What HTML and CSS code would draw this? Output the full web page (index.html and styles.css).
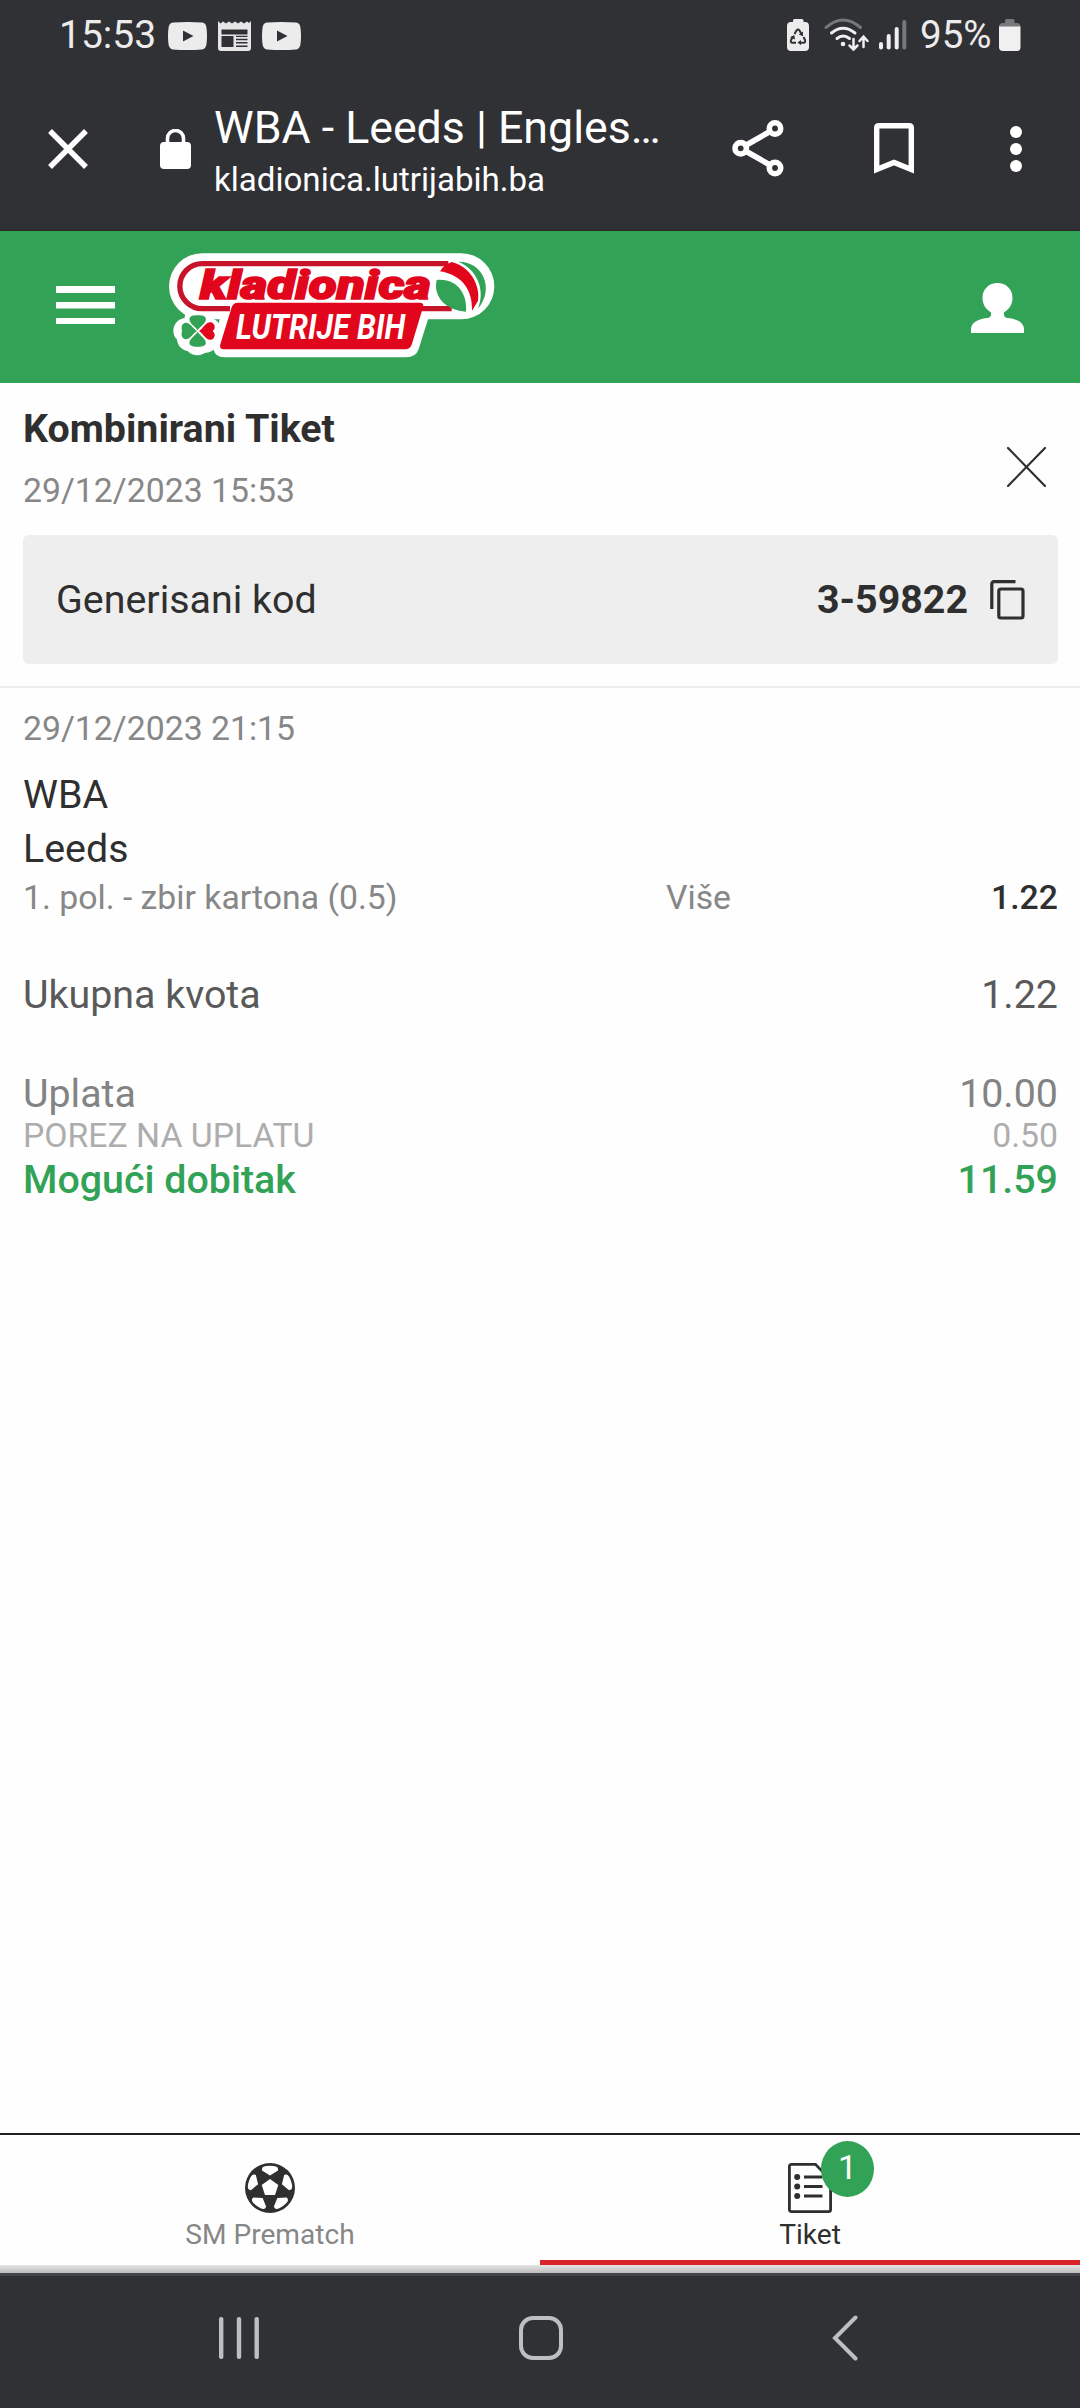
FILE: index.html
```html
<!DOCTYPE html>
<html lang="bs">
<head>
<meta charset="utf-8">
<title>WBA - Leeds</title>
<link rel="stylesheet" href="styles.css">
</head>
<body>
<div class="status">
  <span class="clock">15:53</span>
  <svg class="yt" width="39" height="28" viewBox="0 0 39 28"><path fill="#ececec" fill-rule="evenodd" d="M5 .6Q19.500-.6 34 .6Q38 1 38.500 6Q39.500 14 38.500 22Q38 27 34 27.400Q19.500 28.600 5 27.400Q1 27 .5 22Q-.5 14 .5 6Q1 1 5 .6ZM15 8.500V19.500L25.500 14Z"/></svg>
  <svg class="news" width="33" height="30" viewBox="0 0 33 30"><path fill="#e6e6e6" fill-rule="evenodd" d="M0 0L2.500 2.500L5 .5L8 2.500L11 .5L14 2.500L17 .5L20 2.500L23 .5L26 2.500L29 .5L31 2L33 0V27Q33 30 30 30H3Q0 30 0 27ZM3.500 8.500V13.500H29.500V8.500ZM3.500 15V26H15.500V15ZM18 14.800V16H29.500V14.800ZM18 17.800V19.200H29.500V17.800ZM18 21V22.400H29.500V21ZM18 24.500V26H29.500V24.500Z"/></svg>
  <svg class="yt" width="39" height="28" viewBox="0 0 39 28"><path fill="#ececec" fill-rule="evenodd" d="M5 .6Q19.500-.6 34 .6Q38 1 38.500 6Q39.500 14 38.500 22Q38 27 34 27.400Q19.500 28.600 5 27.400Q1 27 .5 22Q-.5 14 .5 6Q1 1 5 .6ZM15 8.500V19.500L25.500 14Z"/></svg>
  <svg class="saver" width="22" height="32" viewBox="0 0 22 32"><path fill="#ececec" d="M6 3V1.500Q6 0 7.500 0H15Q16.500 0 16.500 1.500V3H18Q22 3 22 7V28Q22 32 18 32H4Q0 32 0 28V7Q0 3 4 3Z"/><g fill="none" stroke="#303135" stroke-width="2"><path d="M7.500 15L9.500 11.500Q11 9.500 12.500 11.500L14.500 15"/><path d="M16.500 18L18 21Q18.800 23.500 16.500 23.700H13"/><path d="M9 23.700H5.500Q3.200 23.500 4 21L5.800 18"/></g><path fill="#303135" d="M16 12.500V17.200L11.800 15.500ZM14 21V26.200L10.500 23.600ZM3 18.300L7.300 16L8 20.500Z"/></svg>
  <svg class="wifi" width="46" height="34" viewBox="0 0 46 34"><g fill="none" stroke="#f0f0f0" stroke-width="3" stroke-linecap="round"><path stroke="#77787a" d="M2 9.500Q19-5.500 36.500 9.500"/><path d="M7.500 15Q19 5.500 31 15"/><path d="M13 20.500Q19 15.500 25.500 20.500"/><path d="M29.500 21V31M25.500 27.500L29.500 31.500L33.500 27.500M39.500 29V19M35.500 23L39.500 18.700L43.500 23" stroke-width="2.500"/></g><circle cx="19" cy="26" r="2.300" fill="#f0f0f0"/></svg>
  <svg class="signal" width="28" height="30" viewBox="0 0 28 30"><g fill="#f0f0f0"><rect y="22" width="4" height="7.500" rx="2"/><rect x="7.700" y="14" width="4" height="15.500" rx="2"/><rect x="15.700" y="7" width="4" height="22.500" rx="2"/><rect x="23.300" y="0" width="4" height="29.500" rx="2" fill="#77787a"/></g></svg>
  <span class="percent">95%</span>
  <svg class="battery" width="22" height="32" viewBox="0 0 22 32"><path fill="#77787a" d="M6 4V1.500Q6 0 7.500 0H14Q15.500 0 15.500 1.500V4H18Q21.500 4 21.500 8H0Q0 4 4 4Z"/><path fill="#f0f0f0" d="M0 7.500H21.500V28Q21.500 32 18 32H4Q0 32 0 28Z"/></svg>
</div>

<div class="browser">
  <svg class="exit" width="40" height="40" viewBox="0 0 40 40"><path d="M2 2L38 38M38 2L2 38" stroke="#fff" stroke-width="5.400"/></svg>
  <svg class="lock" width="31" height="40" viewBox="0 0 31 40"><rect y="13" width="31" height="27" rx="4" fill="#fff"/><path d="M7.500 14V9.500A8 8 0 0 1 23.500 9.500V14" fill="none" stroke="#fff" stroke-width="3.600"/></svg>
  <div class="page">
    <div class="page-title">WBA - Leeds | Engles…</div>
    <div class="page-host">kladionica.lutrijabih.ba</div>
  </div>
  <svg class="share" width="52" height="57" viewBox="0 0 52 57"><g fill="none" stroke="#fff" stroke-width="5.600"><circle cx="43" cy="8.500" r="5.700"/><circle cx="8.700" cy="28.300" r="5.700"/><circle cx="43" cy="48" r="5.700"/><path d="M38 11.500L13.500 25.500M13.500 31L38 45"/></g></svg>
  <svg class="mark" width="40" height="51" viewBox="0 0 40 51"><path d="M5 2.700H35Q37.300 2.700 37.300 5V46.500L20 39.500L2.700 46.500V5Q2.700 2.700 5 2.700Z" fill="none" stroke="#fff" stroke-width="5.400"/></svg>
  <svg class="dots" width="12" height="46" viewBox="0 0 12 46" fill="#fff"><circle cx="6" cy="6" r="6"/><circle cx="6" cy="23" r="6"/><circle cx="6" cy="40" r="6"/></svg>
</div>

<header class="site">
  <svg class="burger" width="59" height="39" viewBox="0 0 59 39" fill="#fff"><rect width="59" height="7"/><rect y="16" width="59" height="6.500"/><rect y="32" width="59" height="6"/></svg>
  <svg class="logo" width="326" height="105" viewBox="57 37 978 315">
    <g fill="#fff">
      <rect x="57" y="38" width="976" height="198" rx="99"/>
      <path d="M225 160H838L836 230L806 325Q798 350 768 350H222Q196 350 190 325Z"/>
      <circle cx="142" cy="237" r="39"/><circle cx="108" cy="270" r="38"/><circle cx="142" cy="305" r="39"/><circle cx="176" cy="270" r="38"/>
      <circle cx="118" cy="294" r="37"/><circle cx="167" cy="299" r="37"/>
    </g>
    <g fill="none" stroke="#c8142b" stroke-width="16"><path d="M895 69H157A67.500 67.500 0 0 0 157 204H240M815 204H905"/></g>
    <path fill="#e2061c" d="M870 92Q880 73 905 64C958 76 992 132 984 180L966 210C968 150 938 103 870 92Z"/>
    <path fill="#32a256" d="M860 118C922 112 952 160 948 213C890 210 848 170 860 118Z"/>
    <path fill="#32a256" d="M925 63C1000 62 1034 145 984 204C1008 145 978 84 925 63Z"/>
    <path fill="#e2061c" d="M264 186H810Q823 186 819 200L786 309Q781 326 765 326H221Q207 326 211 311L245 200Q249 186 264 186Z"/>
    <text class="logo-top" x="150" y="175" textLength="692" lengthAdjust="spacingAndGlyphs">kladionica</text>
    <text class="logo-low" x="258" y="295" textLength="508" lengthAdjust="spacingAndGlyphs">LUTRIJE BIH</text>
    <g fill="#32a256" transform="translate(143 271)">
      <path d="M0-2C-7-15-29-24-24-40Q-18-49 0-47Q18-49 24-40C29-24 7-15 0-2Z"/>
      <path d="M0-2C-7-15-29-24-24-40Q-18-49 0-47Q18-49 24-40C29-24 7-15 0-2Z" transform="rotate(180)"/>
      <path d="M0-2C-7-15-29-24-24-40Q-18-52 0-47Q18-52 24-40C29-24 7-15 0-2Z" transform="rotate(-90)"/>
      <path fill="#e2061c" d="M0-4C-7-17-30-24-26-42Q-14-60 0-45Q14-60 26-42C30-24 7-17 0-4Z" transform="rotate(90)"/>
    </g>
  </svg>
  <svg class="user" width="53" height="50" viewBox="0 0 53 50"><path fill="#fff" d="M26.500 0C35 0 41.500 6 41.500 15C41.500 21 38.500 26 33 29.500C32.500 33 34 34.500 36 35C45 35.500 53 39.500 53 46V50H0V46C0 39.500 8 35.500 17 35C19 34.500 20.500 33 20 29.500C14.500 26 11.500 21 11.500 15C11.500 6 18 0 26.500 0Z"/></svg>
</header>

<main>
  <section class="ticket-head">
    <div class="head-row">
      <div>
        <h1>Kombinirani Tiket</h1>
        <div class="date">29/12/2023 15:53</div>
      </div>
      <svg class="close" width="39" height="40" viewBox="0 0 39 40"><path d="M1 1L38 39M38 1L1 39" stroke="#2f2f2f" stroke-width="2.200" stroke-linecap="round"/></svg>
    </div>
    <div class="code">
      <span>Generisani kod</span>
      <b>3-59822</b>
      <svg width="35" height="40" viewBox="0 0 35 40" fill="none" stroke="#2f2f2f" stroke-width="3.200"><path d="M1.800 29V4Q1.800 1.700 4 1.700H25.500"/><rect x="8.800" y="9" width="24.200" height="29" rx="2"/></svg>
    </div>
  </section>
  <section class="bet">
    <div class="date">29/12/2023 21:15</div>
    <div class="teams">WBA<br>Leeds</div>
    <div class="market"><span>1. pol. - zbir kartona (0.5)</span><span>Više</span><strong>1.22</strong></div>
  </section>
  <section class="totals">
    <div class="row quota"><span>Ukupna kvota</span><span>1.22</span></div>
    <div class="row stake"><span>Uplata</span><span>10.00</span></div>
    <div class="row tax"><span>POREZ NA UPLATU</span><span>0.50</span></div>
    <div class="row win"><span>Mogući dobitak</span><span>11.59</span></div>
  </section>
</main>

<nav class="tabs">
  <div class="tab">
    <svg width="50" height="50" viewBox="0 0 50 50"><circle cx="25" cy="25" r="25" fill="#2f2f2f"/><g fill="#fff"><path d="M25 16L33.300 22L30 32H20L16.700 22Z"/><path d="M17 6Q17 2.800 25 2.800Q33 2.800 33 6V7.500L25 12.500L17 7.500Z"/><path d="M17 6Q17 2.800 25 2.800Q33 2.800 33 6V7.500L25 12.500L17 7.500Z" transform="rotate(72 25 25)"/><path d="M17 6Q17 2.800 25 2.800Q33 2.800 33 6V7.500L25 12.500L17 7.500Z" transform="rotate(144 25 25)"/><path d="M17 6Q17 2.800 25 2.800Q33 2.800 33 6V7.500L25 12.500L17 7.500Z" transform="rotate(216 25 25)"/><path d="M17 6Q17 2.800 25 2.800Q33 2.800 33 6V7.500L25 12.500L17 7.500Z" transform="rotate(288 25 25)"/></g></svg>
    <span>SM Prematch</span>
  </div>
  <div class="tab active">
    <div class="tab-icon">
      <svg width="44" height="50" viewBox="0 0 44 50"><path d="M3.500 1.400H27.500L42.600 17V46.500Q42.600 48.600 40.500 48.600H3.500Q1.400 48.600 1.400 46.500V3.500Q1.400 1.400 3.500 1.400Z" fill="none" stroke="#2f2f2f" stroke-width="2.800"/><g fill="#2f2f2f"><circle cx="9.200" cy="14" r="3"/><circle cx="9.200" cy="23.500" r="3"/><circle cx="9.200" cy="33" r="3"/><path d="M16 12.600H34.500V15.400H16ZM16 22.100H34.500V24.900H16ZM16 31.600H34.500V34.400H16Z"/></g></svg>
      <span class="badge">1</span>
    </div>
    <span>Tiket</span>
  </div>
</nav>
<div class="shade"></div>

<div class="system">
  <svg class="recents" width="40" height="42" viewBox="0 0 40 42" fill="#bebfc1"><rect width="4.400" height="42" rx="2"/><rect x="17.800" width="4.400" height="42" rx="2"/><rect x="35.500" width="4.400" height="42" rx="2"/></svg>
  <svg class="home" width="44" height="44" viewBox="0 0 44 44"><rect x="2" y="2" width="40" height="40" rx="12" fill="none" stroke="#bebfc1" stroke-width="4"/></svg>
  <svg class="back" width="26" height="46" viewBox="0 0 26 46"><path d="M23.500 2.500L3 23L23.500 43.500" fill="none" stroke="#bebfc1" stroke-width="4" stroke-linecap="round"/></svg>
</div>
</body>
</html>
```
FILE: styles.css
```css
* { box-sizing: border-box; }
svg { display: block; flex: none; }

body {
  margin: 0;
  height: 2408px;
  display: flex;
  flex-direction: column;
  background: #fefefe;
  color: #2f2f2f;
  font-family: Roboto, "Liberation Sans", sans-serif;
  white-space: nowrap;
}

/* phone status bar */
.status {
  flex: none;
  height: 70px;
  padding: 0 58px 0 59px;
  display: flex;
  align-items: center;
  background: #303135;
  color: #ececec;
  font-size: 39px;
  line-height: 70px;
}
.clock { width: 109px; }
.yt { margin-top: 1px; }
.news { margin: 1px 11px 0; }
.saver { margin-left: auto; }
.wifi { margin-left: 15px; }
.signal { margin-left: 9px; }
.percent { width: 79px; margin-left: 13px; font-size: 38.5px; }
.battery { margin-right: 1px; }

/* browser toolbar */
.browser {
  flex: none;
  height: 161px;
  padding: 0 58px 2px 48px;
  display: flex;
  align-items: center;
  background: #303135;
  border-bottom: 2px solid #2b2b2b;
  color: #fff;
}
.lock { margin-left: 72px; }
.page { width: 450px; margin-left: 23px; padding-top: 1px; }
.page-title { font-size: 44.7px; line-height: 60px; }
.page-host { margin-top: 1px; font-size: 33.1px; line-height: 42px; }
.share { margin-left: 68px; }
.mark { margin-left: 90px; }
.dots { margin-left: auto; }

/* site header */
.site {
  flex: none;
  height: 152px;
  padding: 0 56px;
  display: flex;
  align-items: center;
  background: #32a256;
}
.burger { margin-top: -3px; }
.logo { margin: -4px 0 0 54px; }
.user { margin: 1px 0 0 auto; }
.logo-top {
  font-size: 122px;
  font-weight: 900;
  font-style: italic;
  fill: #e2061c;
  stroke: #e2061c;
  stroke-width: 5px;
}
.logo-low {
  font-size: 104px;
  font-weight: 700;
  font-style: italic;
  fill: #fff;
}

/* ticket */
main { flex: 1; }
.ticket-head {
  height: 305px;
  padding: 23px 22px 22px 23px;
  border-bottom: 2px solid #ececec;
}
.head-row {
  display: flex;
  justify-content: space-between;
  align-items: flex-start;
  height: 129px;
}
h1 { margin: 0 0 18px; font-size: 39.375px; line-height: 46px; font-weight: 700; }
.close { margin: 41px 12px 0 0; }
.date { font-size: 33.75px; line-height: 42px; color: #878787; }
.code {
  height: 129px;
  padding: 0 33px;
  display: flex;
  align-items: center;
  border-radius: 6px;
  background: #eee;
  font-size: 39.375px;
}
.code b { margin: 0 22px 0 auto; }
.bet { padding: 20px 22px 0 23px; }
.teams { margin-top: 18px; font-size: 39.375px; line-height: 54px; }
.market {
  margin-top: 2px;
  display: grid;
  grid-template-columns: 643px 1fr auto;
  font-size: 33.75px;
  line-height: 40px;
  color: #878787;
}
.market strong { font-weight: 500; color: #2f2f2f; }
.totals { padding: 54px 22px 0 23px; }
.row {
  display: flex;
  justify-content: space-between;
  font-size: 39.375px;
  line-height: 46px;
}
.quota { color: #595959; }
.stake { margin-top: 53px; color: #838383; }
.tax { font-size: 33.75px; line-height: 38px; color: #adadad; }
.win { margin-top: 2px; font-weight: 500; color: #32a256; }

/* bottom tabs */
.tabs {
  flex: none;
  height: 132px;
  display: flex;
  border-top: 2px solid #231f20;
}
.tab {
  flex: 1;
  padding-top: 28px;
  display: flex;
  flex-direction: column;
  align-items: center;
  border-bottom: 5px solid transparent;
  font-size: 28.125px;
  line-height: 34px;
  color: #878787;
}
.tab > span { margin-top: 5px; }
.active { border-color: #d8232a; color: #2f2f2f; }
.tab-icon { position: relative; }
.badge {
  position: absolute;
  left: 33px;
  top: -22px;
  width: 53px;
  height: 56px;
  border-radius: 50%;
  background: #32a256;
  color: #fff;
  font-size: 33.75px;
  line-height: 53px;
  text-align: center;
}
.shade { flex: none; height: 8px; background: linear-gradient(#e4e4e4, #bcbcbc); }

/* phone navigation */
.system {
  flex: none;
  height: 135px;
  padding: 0 222px 0 219px;
  display: flex;
  justify-content: space-between;
  align-items: center;
  background: #303135;
  border-top: 3px solid #43464b;
}
.home { margin-left: -9px; }
.recents, .home, .back { margin-top: -8px; }
```
